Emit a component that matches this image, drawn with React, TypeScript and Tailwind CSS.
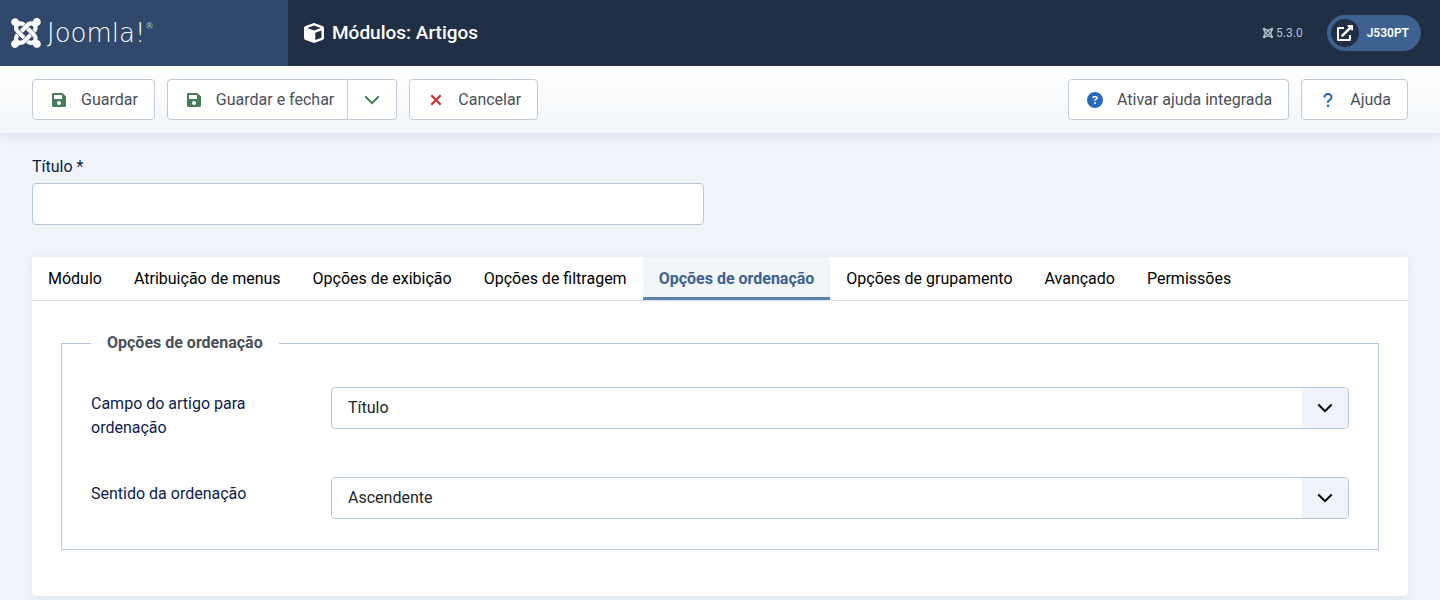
import type { ReactNode } from "react";
import { FaExternalLinkAlt, FaJoomla, FaSave } from "react-icons/fa";
import { FaCircleQuestion, FaCube, FaQuestion } from "react-icons/fa6";

const TABS = [
  "Módulo",
  "Atribuição de menus",
  "Opções de exibição",
  "Opções de filtragem",
  "Opções de ordenação",
  "Opções de grupamento",
  "Avançado",
  "Permissões",
];
const ACTIVE_TAB = "Opções de ordenação";

function Chevron({ className }: { className: string }) {
  return (
    <svg viewBox="0 0 16 10" className={className} fill="none" stroke="currentColor" strokeWidth="2" aria-hidden="true">
      <path d="M1.3 1.5 8 8.2l6.7-6.7" />
    </svg>
  );
}

function ToolbarButton({ icon, children, className }: { icon: ReactNode; children: ReactNode; className: string }) {
  return (
    <button
      type="button"
      className={`flex h-[41px] items-center gap-3 border border-[#c1cbd8] bg-white pl-4 text-[#495057] ${className}`}
    >
      <span className="flex w-5 justify-center">{icon}</span>
      {children}
    </button>
  );
}

function SelectField({ id, label, options }: { id: string; label: string; options: string[] }) {
  return (
    <div className="flex min-h-[53px] items-start">
      <label htmlFor={id} className="w-60 shrink-0 pt-[5px] pr-16 text-[#0b1c4d]">
        {label}
      </label>
      <div className="relative flex-1">
        <select
          id={id}
          className="block h-[42px] w-full appearance-none rounded-[4px] border border-[#b5c6de] bg-white pr-14 pl-4 text-[#22262a]"
        >
          {options.map((option) => (
            <option key={option}>{option}</option>
          ))}
        </select>
        <span className="pointer-events-none absolute inset-y-px right-px flex w-[46px] items-center justify-center rounded-r-[3px] bg-[#eff4fb] text-black">
          <Chevron className="h-[10px] w-4" />
        </span>
      </div>
    </div>
  );
}

export default function App() {
  return (
    <div className="min-h-screen bg-[#f0f4fb] pb-1 font-['Roboto','Liberation_Sans',sans-serif] text-base leading-6">
      <header className="flex h-[66px] items-stretch bg-[#212f45] text-white">
        <a href="#" aria-label="Joomla!" className="flex w-72 shrink-0 items-center gap-1 bg-[#2f486b] pl-[9px]">
          <FaJoomla className="size-[34px]" />
          <span className="flex items-start font-['DejaVu_Sans',sans-serif] text-[26px] leading-9 font-extralight">
            Joomla!<span className="pt-2 text-[8px] leading-none">®</span>
          </span>
        </a>
        <div className="flex flex-1 items-center justify-between pr-[19px] pl-4">
          <h1 className="flex items-center gap-2 text-[19px] font-medium">
            <FaCube className="size-5" />
            Módulos: Artigos
          </h1>
          <div className="flex items-center gap-6">
            <span className="flex items-center gap-[2px] text-xs text-[#b3c0d1]">
              <FaJoomla className="size-3" />
              5.3.0
            </span>
            <a href="#" className="flex h-9 items-center gap-2 rounded-full bg-[#3d6190] pr-3 pl-1 text-xs font-semibold">
              <span className="flex size-7 items-center justify-center rounded-full bg-[#212f45]">
                <FaExternalLinkAlt className="size-4" />
              </span>
              J530PT
            </a>
          </div>
        </div>
      </header>

      <div className="flex h-[67px] items-center justify-between bg-linear-to-b from-white to-[#f2f6f9] px-8 shadow-[0_3px_10px_rgba(50,80,140,0.12)]">
        <div className="flex gap-3">
          <ToolbarButton className="rounded-[4px] pr-4" icon={<FaSave className="size-4 text-[#457d54]" />}>
            Guardar
          </ToolbarButton>
          <div className="flex">
            <ToolbarButton className="rounded-l-[4px] pr-[13px]" icon={<FaSave className="size-4 text-[#457d54]" />}>
              Guardar e fechar
            </ToolbarButton>
            <button
              type="button"
              aria-label="Mais opções"
              className="flex w-[49px] items-center justify-center rounded-r-[4px] border border-l-0 border-[#c1cbd8] bg-white text-[#457d54]"
            >
              <Chevron className="h-[10px] w-4" />
            </button>
          </div>
          <ToolbarButton
            className="rounded-[4px] pr-4"
            icon={
              <svg viewBox="0 0 12 12" className="size-3 text-[#c9302c]" stroke="currentColor" strokeWidth="2.2" aria-hidden="true">
                <path d="M1.3 1.3l9.4 9.4M10.7 1.3l-9.4 9.4" />
              </svg>
            }
          >
            Cancelar
          </ToolbarButton>
        </div>
        <div className="flex gap-3">
          <ToolbarButton className="rounded-[4px] pr-4" icon={<FaCircleQuestion className="size-4 text-[#2a69b8]" />}>
            Ativar ajuda integrada
          </ToolbarButton>
          <ToolbarButton className="rounded-[4px] pr-4" icon={<FaQuestion className="size-4 text-[#2a69b8]" />}>
            Ajuda
          </ToolbarButton>
        </div>
      </div>

      <main className="px-8 pt-[22px]">
        <div className="w-1/2 pr-4">
          <label htmlFor="title" className="mb-1 block text-[#0b1c4d]">
            Título *
          </label>
          <input
            id="title"
            type="text"
            className="block h-[42px] w-full rounded-[4px] border border-[#b5c6de] bg-white px-4"
          />
        </div>

        <section className="mt-8 rounded-[4px] bg-white shadow-[0_2px_10px_rgba(50,80,140,0.1)]">
          <div role="tablist" className="flex h-11 border-b border-[#d9e2f0] text-black">
            {TABS.map((tab) => (
              <button
                key={tab}
                type="button"
                role="tab"
                aria-selected={tab === ACTIVE_TAB}
                className={
                  tab === ACTIVE_TAB
                    ? "border-b-[3px] border-[#5f83ab] bg-[#f2f6f9] px-4 pt-[3px] font-bold text-[#3d6190]"
                    : "px-4"
                }
              >
                {tab}
              </button>
            ))}
          </div>
          <div className="px-[29px] pt-[30px] pb-[46px]">
            <fieldset className="border border-[#b5c6de] px-[29px] pt-8 pb-[19px]">
              <legend className="px-4 font-bold text-[#495057]">Opções de ordenação</legend>
              <div className="flex flex-col gap-[37px]">
                <SelectField id="order-field" label="Campo do artigo para ordenação" options={["Título"]} />
                <SelectField id="order-direction" label="Sentido da ordenação" options={["Ascendente", "Descendente"]} />
              </div>
            </fieldset>
          </div>
        </section>
      </main>
    </div>
  );
}
